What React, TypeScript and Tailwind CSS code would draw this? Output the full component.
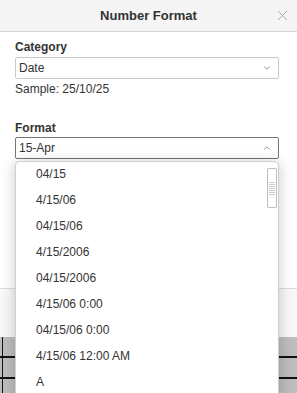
import { ChevronDown, ChevronUp, X } from 'lucide-react'

const formats = [
  '04/15',
  '4/15/06',
  '04/15/06',
  '4/15/2006',
  '04/15/2006',
  '4/15/06 0:00',
  '04/15/06 0:00',
  '4/15/06 12:00 AM',
  'A',
]

export default function App() {
  return (
    <div
      className="relative h-[393px] w-[297px] overflow-hidden bg-[#bdbdbd] text-[#333]"
      style={{ fontFamily: '"Liberation Sans", Arial, sans-serif' }}
    >
      <div className="flex h-[337px] flex-col bg-white">
        <header className="relative flex h-[32px] items-center justify-center border-b border-[#d4d4d4] bg-[#f5f5f5]">
          <span className="text-[13px] font-bold text-[#333]">Number Format</span>
          <X className="absolute right-[6px] top-[7px] h-[17px] w-[17px] text-[#a0a0a0]" strokeWidth={1.2} />
        </header>

        <div className="flex flex-1 flex-col px-[15px] pt-[8px]">
          <label className="text-[12px] font-bold leading-[15px]">Category</label>
          <div className="mt-[2px] flex h-[22px] w-[264px] items-center justify-between rounded-[2px] border border-[#c8c8c8] pl-[3px] pr-[6px] text-[12px]">
            <span>Date</span>
            <ChevronDown className="h-[10px] w-[10px] text-[#777]" strokeWidth={2} />
          </div>
          <div className="mt-[3px] text-[12px] leading-[15px]">Sample: 25/10/25</div>

          <label className="mt-[24px] text-[12px] font-bold leading-[15px]">Format</label>
          <div className="mt-[1px] flex h-[22px] w-[264px] items-center justify-between rounded-[2px] border border-[#757575] pl-[3px] pr-[6px] text-[12px]">
            <span>15-Apr</span>
            <ChevronUp className="h-[10px] w-[10px] text-[#777]" strokeWidth={2} />
          </div>
        </div>

        <div className="h-[49px] border-t border-[#dcdcdc] bg-[#f8f8f8]" />
      </div>

      <div className="flex flex-col">
        {[0, 1, 2].map((i) => (
          <div key={i} className="h-[21px] border-b-2 border-[#111]" />
        ))}
      </div>
      <div className="absolute left-[2px] top-[337px] h-[56px] w-[1px] bg-[#111]" />

      <div className="absolute left-[15px] top-[161px] h-[240px] w-[264px] rounded-t-[4px] border border-[#cfcfcf] bg-white shadow-[0_2px_14px_rgba(0,0,0,0.22)]">
        <ul className="-mt-[1px] text-[12px]">
          {formats.map((f) => (
            <li key={f} className="flex h-[26px] items-center pl-[20px]">
              {f}
            </li>
          ))}
        </ul>
        <div className="absolute right-[1px] top-[6px] flex h-[40px] w-[10px] flex-col items-center justify-center gap-[1px] rounded-[2px] border border-[#bdbdbd] bg-white">
          {[0, 1, 2, 3, 4, 5, 6].map((i) => (
            <div key={i} className="h-[1px] w-[6px] bg-[#c9c9c9]" />
          ))}
        </div>
      </div>
    </div>
  )
}
